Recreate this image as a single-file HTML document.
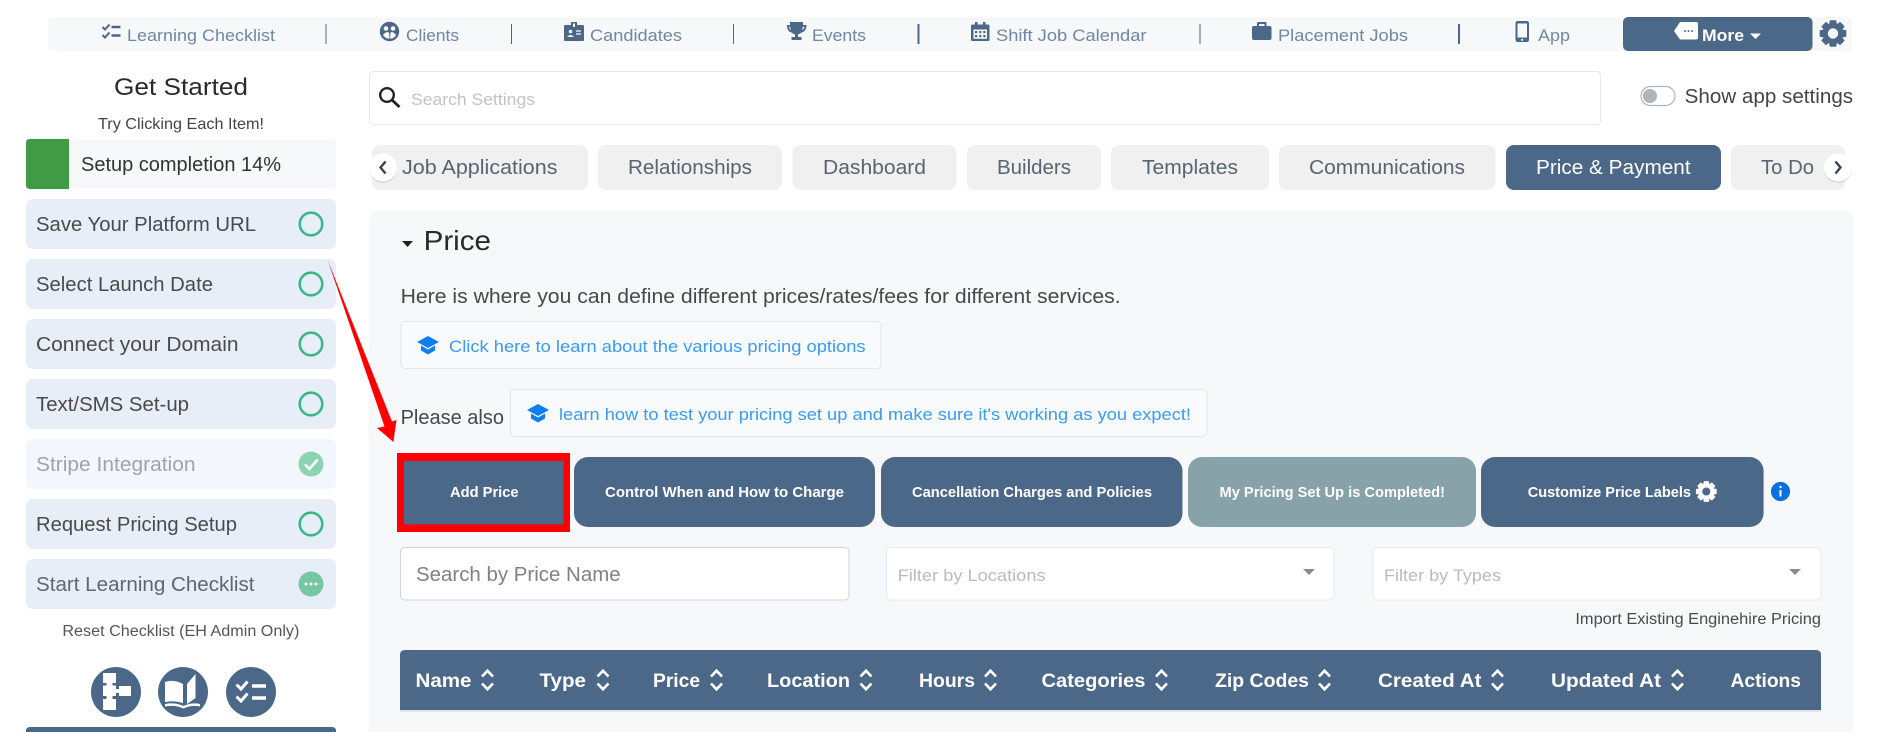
<!DOCTYPE html>
<html lang="en"><head><meta charset="utf-8"><title>Price &amp; Payment Settings</title>
<style>
html,body{margin:0;padding:0;background:#fff;width:1887px;height:732px;overflow:hidden}
svg{display:block}
text{font-family:"Liberation Sans",sans-serif;white-space:pre}
.nav{font-size:17px;fill:#6f87a3}
.side{font-size:20.5px;fill:#4a4a4a}
.tab{font-size:20px;fill:#5a6372}
.btn{font-size:15px;font-weight:700;fill:#fff}
.th{font-size:19.5px;font-weight:700;fill:#fff}
.lnk{font-size:17px;fill:#3a9bf6}
.st{fill:none;stroke:#3cb587;stroke-width:2.6}
</style></head><body>
<svg width="1887" height="732" viewBox="0 0 1887 732" xmlns="http://www.w3.org/2000/svg">
<defs>
<g id="cap"><path d="M11 0 22 6 11 12 0 6Z"/><path d="M4 9.500 11 13.500 18 9.500V14.500L11 18.500 4 14.500Z"/></g>
<g id="sort" fill="none" stroke="#fff" stroke-width="2.600"><path d="M1 7.500 6.500 1.800 12 7.500"/><path d="M1 14.500 6.500 20.200 12 14.500"/></g>
<g id="tooth"><path d="M-2.800-12.800H2.800L3.600-8H-3.600Z"/></g>
<g id="gear"><circle r="7.600" fill="none" stroke-width="4.800"/><use href="#tooth"/><use href="#tooth" transform="rotate(45)"/><use href="#tooth" transform="rotate(90)"/><use href="#tooth" transform="rotate(135)"/><use href="#tooth" transform="rotate(180)"/><use href="#tooth" transform="rotate(225)"/><use href="#tooth" transform="rotate(270)"/><use href="#tooth" transform="rotate(315)"/></g>
</defs>

<!-- top nav -->
<rect x="48" y="17" width="1804" height="34" rx="5" fill="#f7f8fa"/>
<g fill="none" stroke="#4c6888" stroke-width="2"><path d="M102.500 27 105 29.500 109.500 24.500M102.500 35 105 37.500 109.500 32.500"/><path d="M111.500 27H120.500M111.500 35.500H120.500" stroke-width="2.400"/></g>
<text x="127" y="41" class="nav" textLength="148" lengthAdjust="spacingAndGlyphs">Learning Checklist</text>
<rect x="325.500" y="24" width="1" height="20" fill="#4c6888"/>
<circle cx="389.500" cy="31.500" r="9.700" fill="#4c6888"/><circle cx="386" cy="28.500" r="2.300" fill="#f7f8fa"/><circle cx="393" cy="28.500" r="2.300" fill="#f7f8fa"/><path d="M383 35q3-4 6-2.500l.5 6q-4 .5-6.500-3.500ZM396 35q-3-4-5.500-2.500l-.5 6q4 .5 6-3.500Z" fill="#f7f8fa"/>
<text x="406" y="41" class="nav" textLength="53" lengthAdjust="spacingAndGlyphs">Clients</text>
<rect x="511" y="24" width="1" height="20" fill="#4c6888"/>
<path d="M564 26.500q0-1.500 1.500-1.500H571V22H577V25H582.500q1.500 0 1.500 1.500V40q0 1-1.500 1H565.500q-1.500 0-1.500-1Z" fill="#4c6888"/><rect x="573" y="23.500" width="2" height="3.500" fill="#f7f8fa"/><circle cx="570.500" cy="31.500" r="1.800" fill="#f7f8fa"/><path d="M567 37q3.500-4 7 0Z" fill="#f7f8fa"/><path d="M576 31h5M576 34h5" stroke="#f7f8fa" stroke-width="1.300"/>
<text x="590" y="41" class="nav" textLength="92" lengthAdjust="spacingAndGlyphs">Candidates</text>
<rect x="733" y="24" width="1" height="20" fill="#4c6888"/>
<path d="M790 22H803V25H806.500C806.500 30 804 32 801.500 32.500 800.500 33.500 799.500 34 798 34.200V37H801.500V40H791.500V37H795V34.200C793.500 34 792.500 33.500 791.500 32.500 789 32 787 30 787 25H790ZM789 26.800C789.300 28.500 790 29.700 790.800 30.300L790.200 26.800ZM804.500 26.800H802.800L802.200 30.300C803 29.700 804.200 28.500 804.500 26.800Z" fill="#4c6888" fill-rule="evenodd"/>
<text x="812" y="41" class="nav" textLength="54" lengthAdjust="spacingAndGlyphs">Events</text>
<rect x="917.500" y="24" width="2" height="20" fill="#4c6888"/>
<path d="M971 26q0-1.500 1.500-1.500H975V22H977.500V24.500H983V22H985.500V24.500H988q1.500 0 1.500 1.500V39.500q0 1.500-1.500 1.500H972.500q-1.500 0-1.500-1.500Z" fill="#4c6888"/><path d="M973.500 29.500H987V38.800H973.500Z" fill="#f7f8fa"/><path d="M975 31h2.200v2.200H975ZM979.200 31h2.200v2.200h-2.200ZM983.300 31h2.200v2.200h-2.200ZM975 35h2.200v2.200H975ZM979.200 35h2.200v2.200h-2.200ZM983.300 35h2.200v2.200h-2.200Z" fill="#4c6888"/>
<text x="996" y="41" class="nav" textLength="150.500" lengthAdjust="spacingAndGlyphs">Shift Job Calendar</text>
<rect x="1199.500" y="24" width="1" height="20" fill="#4c6888"/>
<path d="M1252 28q0-2 2-2H1257V23.500q0-1.500 1.500-1.500H1265q1.500 0 1.500 1.500V26H1269.500q2 0 2 2V38q0 2-2 2H1254q-2 0-2-2ZM1259 26H1264.500V24H1259Z" fill="#4c6888" fill-rule="evenodd"/>
<text x="1278" y="41" class="nav" textLength="130" lengthAdjust="spacingAndGlyphs">Placement Jobs</text>
<rect x="1458" y="24" width="2" height="20" fill="#4c6888"/>
<rect x="1515.500" y="21" width="13.500" height="21" rx="2.200" fill="#4c6888"/><rect x="1517.500" y="23.500" width="9.500" height="14" fill="#f7f8fa"/><circle cx="1522.200" cy="39.800" r="1.100" fill="#f7f8fa"/>
<text x="1538" y="41" class="nav" textLength="32" lengthAdjust="spacingAndGlyphs">App</text>
<rect x="1623" y="17" width="189.500" height="34" rx="5" fill="#4c6888"/>
<path d="M1680 22H1696q2 0 2 2V37.500q0 2-2 2H1680L1674 31Z" fill="#fff"/><circle cx="1685" cy="31" r="1" fill="#4c6888"/><circle cx="1688.500" cy="31" r="1" fill="#4c6888"/><circle cx="1692" cy="31" r="1" fill="#4c6888"/>
<text x="1702" y="41" font-size="17" font-weight="700" fill="#fff" textLength="42" lengthAdjust="spacingAndGlyphs">More</text>
<path d="M1750 33.500H1761L1755.500 39Z" fill="#fff"/>
<use href="#gear" transform="translate(1833,33.500)" fill="#4c6888" stroke="#4c6888"/>

<!-- sidebar -->
<text x="114" y="95" font-size="24" fill="#2a2a2a" textLength="134" lengthAdjust="spacingAndGlyphs">Get Started</text>
<text x="98" y="129" font-size="16" fill="#444" textLength="166" lengthAdjust="spacingAndGlyphs">Try Clicking Each Item!</text>
<rect x="26" y="139" width="310" height="50" rx="4" fill="#f7f8fa"/>
<path d="M30 139H69V189H30q-4 0-4-4V143q0-4 4-4Z" fill="#419a46"/>
<text x="81" y="171" font-size="20" fill="#333" textLength="200" lengthAdjust="spacingAndGlyphs">Setup completion 14%</text>

<rect x="26" y="199" width="310" height="50" rx="7" fill="#e8eef8"/>
<text x="36" y="231" class="side" textLength="220" lengthAdjust="spacingAndGlyphs">Save Your Platform URL</text>
<circle class="st" cx="311" cy="224" r="11.300"/>
<rect x="26" y="259" width="310" height="50" rx="7" fill="#e8eef8"/>
<text x="36" y="291" class="side" textLength="177" lengthAdjust="spacingAndGlyphs">Select Launch Date</text>
<circle class="st" cx="311" cy="284" r="11.300"/>
<rect x="26" y="319" width="310" height="50" rx="7" fill="#e8eef8"/>
<text x="36" y="351" class="side" textLength="202.500" lengthAdjust="spacingAndGlyphs">Connect your Domain</text>
<circle class="st" cx="311" cy="344" r="11.300"/>
<rect x="26" y="379" width="310" height="50" rx="7" fill="#e8eef8"/>
<text x="36" y="411" class="side" textLength="153" lengthAdjust="spacingAndGlyphs">Text/SMS Set-up</text>
<circle class="st" cx="311" cy="404" r="11.300"/>
<rect x="26" y="439" width="310" height="50" rx="7" fill="#f3f6fc"/>
<text x="36" y="471" class="side" style="fill:#a0a3a9" textLength="159.500" lengthAdjust="spacingAndGlyphs">Stripe Integration</text>
<circle cx="311" cy="464" r="12.500" fill="#8dd3b0"/><path d="M305 464.500 309.500 469 317.500 459.500" fill="none" stroke="#fff" stroke-width="2.600"/>
<rect x="26" y="499" width="310" height="50" rx="7" fill="#e8eef8"/>
<text x="36" y="531" class="side" textLength="201" lengthAdjust="spacingAndGlyphs">Request Pricing Setup</text>
<circle class="st" cx="311" cy="524" r="11.300"/>
<rect x="26" y="559" width="310" height="50" rx="7" fill="#e8eef8"/>
<text x="36" y="591" class="side" style="fill:#5f6670" textLength="218.500" lengthAdjust="spacingAndGlyphs">Start Learning Checklist</text>
<circle cx="311" cy="584" r="12.500" fill="#74c7a2"/><circle cx="306" cy="584" r="1.500" fill="#fff"/><circle cx="311" cy="584" r="1.500" fill="#fff"/><circle cx="316" cy="584" r="1.500" fill="#fff"/>
<text x="62.400" y="636" font-size="15.500" fill="#555" textLength="237" lengthAdjust="spacingAndGlyphs">Reset Checklist (EH Admin Only)</text>

<circle cx="116" cy="692" r="25" fill="#4c6888"/>
<path d="M103 673H116V683H112.500V685.500H116V689H119V686H131V696H119V693H116V696H112.500V699H116V710H103V699H106.500V696H103V685.500H106.500V683H103Z" fill="#fff"/>
<circle cx="183" cy="692" r="25" fill="#4c6888"/>
<path d="M165 682Q174 679 183 684V703Q174 700 165 702ZM187 684 195.500 674V698L187 704ZM197.500 680H200V704Q192 702 183.500 706Q175 702 165 704V706.500Q175 704.500 183.500 708.500Q192 704.500 200 706.500V680Z" fill="#fff"/>
<circle cx="251" cy="692" r="25" fill="#4c6888"/>
<g fill="none" stroke="#fff"><path d="M236.500 684.500 241 689 247.500 681.500M236.500 696.500 241 701 247.500 693.500" stroke-width="3"/><path d="M252 686H266M252 698H266" stroke-width="3.600"/></g>
<path d="M26 732V731q0-4 4-4H332q4 0 4 4V732Z" fill="#4c6888"/>

<!-- search row -->
<rect x="369.500" y="71.500" width="1231" height="53" rx="4" fill="#fff" stroke="#e6e7e9"/>
<circle cx="387" cy="95" r="6.800" fill="none" stroke="#222" stroke-width="2.400"/><path d="M392 100 399.500 107" stroke="#222" stroke-width="2.800"/>
<text x="411" y="105" font-size="17" fill="#c2c2c2" textLength="124" lengthAdjust="spacingAndGlyphs">Search Settings</text>
<rect x="1641" y="86.500" width="34" height="19" rx="9.500" fill="#fff" stroke="#aeb5bf" stroke-width="1.200"/><circle cx="1650" cy="96" r="7" fill="#adb5bd"/>
<text x="1684.600" y="103" font-size="20" fill="#444" textLength="168.500" lengthAdjust="spacingAndGlyphs">Show app settings</text>

<!-- tabs -->
<rect x="372" y="145" width="216" height="45" rx="8" fill="#f0f0f0"/>
<text x="402" y="174" class="tab" textLength="155.500" lengthAdjust="spacingAndGlyphs">Job Applications</text>
<rect x="598" y="145" width="184" height="45" rx="8" fill="#f0f0f0"/>
<text x="628" y="174" class="tab" textLength="124" lengthAdjust="spacingAndGlyphs">Relationships</text>
<rect x="792.500" y="145" width="164" height="45" rx="8" fill="#f0f0f0"/>
<text x="823" y="174" class="tab" textLength="103" lengthAdjust="spacingAndGlyphs">Dashboard</text>
<rect x="967" y="145" width="134" height="45" rx="8" fill="#f0f0f0"/>
<text x="997" y="174" class="tab" textLength="74" lengthAdjust="spacingAndGlyphs">Builders</text>
<rect x="1111" y="145" width="158" height="45" rx="8" fill="#f0f0f0"/>
<text x="1142" y="174" class="tab" textLength="96" lengthAdjust="spacingAndGlyphs">Templates</text>
<rect x="1279" y="145" width="216.500" height="45" rx="8" fill="#f0f0f0"/>
<text x="1309" y="174" class="tab" textLength="156" lengthAdjust="spacingAndGlyphs">Communications</text>
<rect x="1506" y="145" width="215" height="45" rx="8" fill="#4c6888"/>
<text x="1536" y="174" class="tab" style="fill:#fff" textLength="154.600" lengthAdjust="spacingAndGlyphs">Price &amp; Payment</text>
<rect x="1731" y="145" width="114" height="45" rx="8" fill="#f0f0f0"/>
<text x="1761" y="174" class="tab" textLength="53" lengthAdjust="spacingAndGlyphs">To Do</text>
<circle cx="383" cy="169" r="14" fill="#000" opacity=".1"/><circle cx="383" cy="167.500" r="14" fill="#fff"/><path d="M385.500 161.500 380.500 167.500 385.500 173.500" fill="none" stroke="#3a4250" stroke-width="2.400"/>
<circle cx="1838" cy="169" r="14" fill="#000" opacity=".1"/><circle cx="1838" cy="167.500" r="14" fill="#fff"/><path d="M1835.500 161.500 1840.500 167.500 1835.500 173.500" fill="none" stroke="#3a4250" stroke-width="2.400"/>

<!-- panel -->
<path d="M369 732V222q0-12 12-12H1841q12 0 12 12V732Z" fill="#f7f8fa"/>
<path d="M402 241H413L407.500 247Z" fill="#222"/>
<text x="423.600" y="250" font-size="28" fill="#2a2a2a" textLength="67.400" lengthAdjust="spacingAndGlyphs">Price</text>
<text x="400.600" y="303" font-size="20" fill="#484848" textLength="720" lengthAdjust="spacingAndGlyphs">Here is where you can define different prices/rates/fees for different services.</text>

<rect x="401" y="321.500" width="480" height="47" rx="4" fill="#f9fafb" stroke="#e2e5e9"/>
<use href="#cap" x="417" y="336" fill="#0d7ff2"/>
<text x="449" y="352" class="lnk" textLength="416.600" lengthAdjust="spacingAndGlyphs">Click here to learn about the various pricing options</text>
<text x="400.600" y="424" font-size="20" fill="#484848" textLength="103.400" lengthAdjust="spacingAndGlyphs">Please also</text>
<rect x="510.500" y="389.500" width="696.500" height="47" rx="4" fill="#f9fafb" stroke="#e2e5e9"/>
<use href="#cap" x="527" y="404" fill="#0d7ff2"/>
<text x="559" y="420" class="lnk" textLength="632" lengthAdjust="spacingAndGlyphs">learn how to test your pricing set up and make sure it's working as you expect!</text>

<!-- action buttons -->
<rect x="397" y="453" width="173" height="79" fill="#f00"/>
<rect x="404" y="461" width="159.500" height="63.500" fill="#4c6888"/>
<text x="450" y="497" class="btn" textLength="68.600" lengthAdjust="spacingAndGlyphs">Add Price</text>
<rect x="574" y="457" width="301" height="70" rx="14" fill="#4c6888"/>
<text x="605" y="497" class="btn" textLength="239" lengthAdjust="spacingAndGlyphs">Control When and How to Charge</text>
<rect x="881" y="457" width="301.500" height="70" rx="14" fill="#4c6888"/>
<text x="912" y="497" class="btn" textLength="240" lengthAdjust="spacingAndGlyphs">Cancellation Charges and Policies</text>
<rect x="1188" y="457" width="288" height="70" rx="14" fill="#87a2a8"/>
<text x="1219.500" y="497" class="btn" textLength="225.500" lengthAdjust="spacingAndGlyphs">My Pricing Set Up is Completed!</text>
<rect x="1481" y="457" width="282.600" height="70" rx="14" fill="#4c6888"/>
<text x="1527.700" y="497" class="btn" textLength="163.300" lengthAdjust="spacingAndGlyphs">Customize Price Labels</text>
<use href="#gear" transform="translate(1706.300,491.500) scale(.78)" fill="#fff" stroke="#fff"/>
<circle cx="1780.500" cy="491.500" r="9.600" fill="#0b6fe0"/><rect x="1779.500" y="490" width="2" height="6.500" fill="#fff"/><circle cx="1780.500" cy="487" r="1.200" fill="#fff"/>

<!-- filters -->
<rect x="400.500" y="547.500" width="448.500" height="52.500" rx="4" fill="#fff" stroke="#ced4da"/>
<text x="416" y="581" font-size="20" fill="#7a828a" textLength="204.600" lengthAdjust="spacingAndGlyphs">Search by Price Name</text>
<rect x="886.500" y="547.500" width="447.500" height="52.500" rx="4" fill="#fff" stroke="#e8e9eb"/>
<text x="897.600" y="581" font-size="17" fill="#bbb" textLength="148" lengthAdjust="spacingAndGlyphs">Filter by Locations</text>
<path d="M1303 569H1315L1309 575Z" fill="#8c8c8c"/>
<rect x="1373" y="547.500" width="448" height="52.500" rx="4" fill="#fff" stroke="#e8e9eb"/>
<text x="1384" y="581" font-size="17" fill="#bbb" textLength="117" lengthAdjust="spacingAndGlyphs">Filter by Types</text>
<path d="M1789 569H1801L1795 575Z" fill="#8c8c8c"/>
<text x="1575.400" y="624" font-size="15.500" fill="#4a4a4a" textLength="245.600" lengthAdjust="spacingAndGlyphs">Import Existing Enginehire Pricing</text>

<!-- table header -->
<rect x="400" y="710" width="1421" height="2" fill="#e2e5ea"/>
<path d="M400 710V655q0-5 5-5H1816q5 0 5 5V710Z" fill="#4c6888"/>
<text x="415.500" y="687" class="th" textLength="56" lengthAdjust="spacingAndGlyphs">Name</text><use href="#sort" x="481" y="669"/>
<text x="539.500" y="687" class="th" textLength="46.500" lengthAdjust="spacingAndGlyphs">Type</text><use href="#sort" x="596.500" y="669"/>
<text x="653" y="687" class="th" textLength="47" lengthAdjust="spacingAndGlyphs">Price</text><use href="#sort" x="710" y="669"/>
<text x="767" y="687" class="th" textLength="83" lengthAdjust="spacingAndGlyphs">Location</text><use href="#sort" x="859.500" y="669"/>
<text x="919" y="687" class="th" textLength="56" lengthAdjust="spacingAndGlyphs">Hours</text><use href="#sort" x="984" y="669"/>
<text x="1041.500" y="687" class="th" textLength="104" lengthAdjust="spacingAndGlyphs">Categories</text><use href="#sort" x="1155" y="669"/>
<text x="1215" y="687" class="th" textLength="94" lengthAdjust="spacingAndGlyphs">Zip Codes</text><use href="#sort" x="1318" y="669"/>
<text x="1378" y="687" class="th" textLength="103.500" lengthAdjust="spacingAndGlyphs">Created At</text><use href="#sort" x="1491" y="669"/>
<text x="1551" y="687" class="th" textLength="110" lengthAdjust="spacingAndGlyphs">Updated At</text><use href="#sort" x="1671" y="669"/>
<text x="1730.500" y="687" class="th" textLength="70.500" lengthAdjust="spacingAndGlyphs">Actions</text>

<!-- red annotation arrow -->
<path d="M327.600 260 392 421.500 396.500 420 393.400 442 377 428 384.500 426.500Z" fill="#f00"/>
</svg>
</body></html>
